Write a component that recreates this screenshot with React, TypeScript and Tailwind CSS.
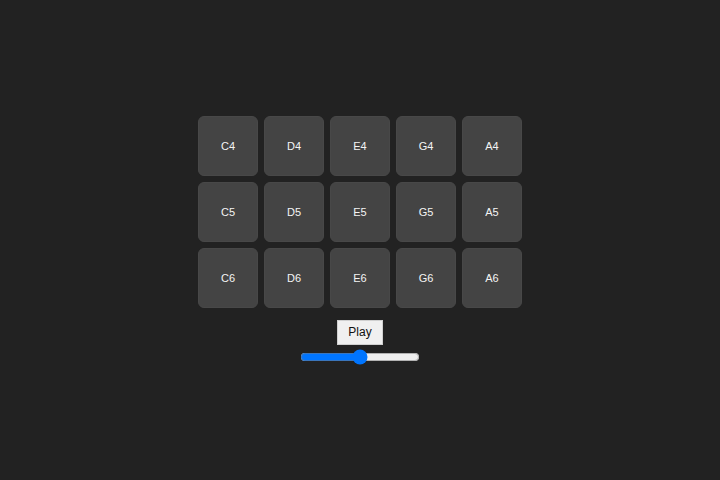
import React from "react";

const rows = [
  ["C4", "D4", "E4", "G4", "A4"],
  ["C5", "D5", "E5", "G5", "A5"],
  ["C6", "D6", "E6", "G6", "A6"],
];

export default function App() {
  return (
    <div className="w-[720px] h-[480px] bg-[#222222] flex flex-col items-center justify-center" style={{ fontFamily: '"Liberation Sans", Arial, sans-serif' }}>
      <div className="grid grid-cols-[repeat(5,60px)] gap-[6px]">
        {rows.flat().map((n) => (
          <div key={n} className="w-[60px] h-[60px] rounded-[6px] bg-[#444444] border border-[#484848] flex items-center justify-center pt-[2px] text-[11px] text-[#f4f4f4]">
            {n}
          </div>
        ))}
      </div>
      <button className="mt-[12px] h-[25px] w-[46px] bg-[#f0f0f0] border border-[#d0d0d0] text-[12px] text-[#111] leading-none" style={{ fontFamily: '"Liberation Sans", Arial, sans-serif' }}>
        Play
      </button>
      <input type="range" min={0} max={100} defaultValue={50} className="mt-[4px] w-[120px]" />
    </div>
  );
}
